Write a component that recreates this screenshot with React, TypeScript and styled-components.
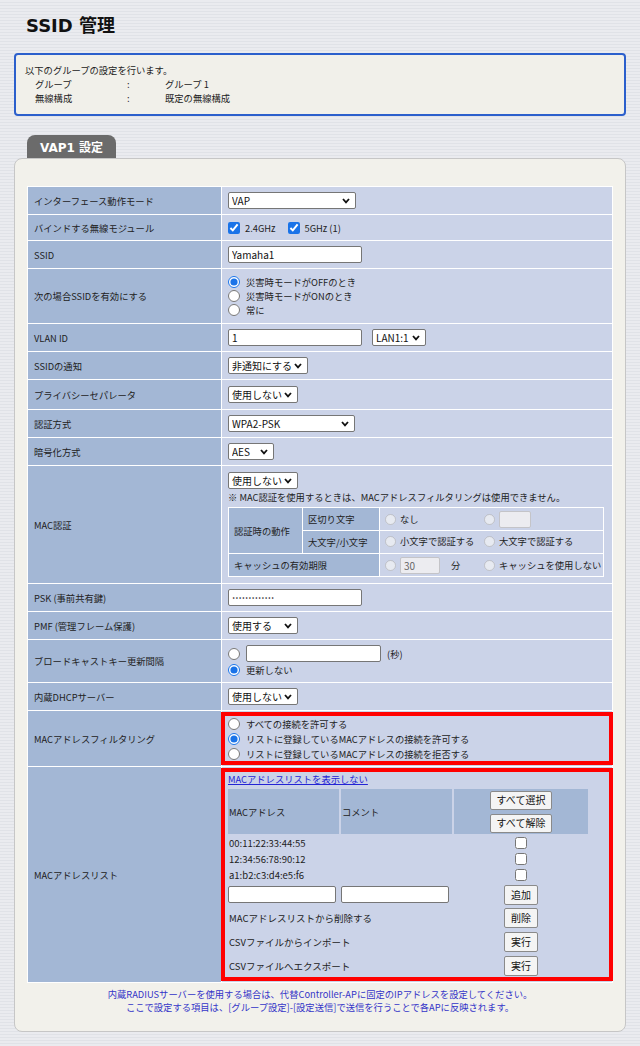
import React from "react";
import styled, { createGlobalStyle } from "styled-components";

const GlobalStyle = createGlobalStyle`
  html, body { margin: 0; padding: 0; }
  body {
    background: repeating-linear-gradient(to bottom, #eaebef 0px, #eaebef 2px, #e0e2e7 2px, #e0e2e7 3px);
    font-family: "Noto Sans CJK JP", "Noto Sans", sans-serif;
    font-size: 9.3px;
    color: #222;
  }
`;

const Page = styled.div`
  padding: 14px 14px 13px;
`;

const Title = styled.h1`
  margin: 0 0 15px 12px;
  font-family: "DejaVu Sans", "Noto Sans CJK JP", sans-serif;
  font-size: 18px;
  font-weight: bold;
  line-height: 24px;
  color: #111;
`;

const InfoBox = styled.div`
  border: 2px solid #2b5fcc;
  border-radius: 4px;
  background: #f1f0ea;
  padding: 8px 9px 9px;
  line-height: 14px;
`;

const InfoGrid = styled.div`
  display: grid;
  grid-template-columns: 92px 38px auto;
  padding-left: 10px;
`;

const Tab = styled.div`
  margin: 19px 0 0 13px;
  width: 89px;
  height: 23px;
  background: #6b6b6b;
  border-radius: 8px 8px 0 0;
  color: #fff;
  font-family: "DejaVu Sans", "Noto Sans CJK JP", sans-serif;
  font-weight: bold;
  font-size: 12px;
  display: flex;
  align-items: center;
  justify-content: center;
`;

const Panel = styled.div`
  background: #f2f1eb;
  border: 1px solid #c6c6c6;
  border-radius: 8px;
  padding: 27px 12px 17px;
`;

const MainTable = styled.table`
  width: 100%;
  border-collapse: collapse;
  table-layout: fixed;
`;

const LabelCol = styled.col`
  width: 194px;
`;

const Label = styled.td`
  background: #a3b7d5;
  border: 1px solid #fff;
  padding: 0 6px;
  vertical-align: middle;
`;

const Value = styled.td<{ $pv?: number; $pb?: number; $highlight?: boolean }>`
  background: #cbd3e8;
  border: 1px solid #fff;
  padding: ${(p) => p.$pv ?? 5}px 6px ${(p) => p.$pb ?? p.$pv ?? 5}px;
  vertical-align: middle;
  position: ${(p) => (p.$highlight ? "relative" : "static")};
  &::after {
    content: "";
    display: ${(p) => (p.$highlight ? "block" : "none")};
    position: absolute;
    top: 1px;
    bottom: 1px;
    left: -1px;
    right: -1px;
    border: 4px solid #f00;
    pointer-events: none;
  }
`;

const Line = styled.div<{ $h?: number; $gap?: number }>`
  display: flex;
  align-items: center;
  min-height: ${(p) => p.$h ?? 17}px;
  gap: ${(p) => p.$gap ?? 6}px;
  line-height: 14px;
`;

const SelectWrap = styled.span<{ $w: number }>`
  position: relative;
  display: inline-block;
  width: ${(p) => p.$w}px;
  height: 17px;
`;

const SelectBox = styled.select`
  appearance: none;
  -webkit-appearance: none;
  width: 100%;
  height: 17px;
  box-sizing: border-box;
  border: 1px solid #767676;
  border-radius: 2px;
  background: #fff;
  font-family: "Noto Sans CJK JP", sans-serif;
  font-size: 10px;
  color: #111;
  padding: 0 14px 0 3px;
  margin: 0;
  line-height: 15px;
`;

const Chevron = styled.svg`
  position: absolute;
  right: 6px;
  top: 6px;
  pointer-events: none;
`;

const Select = ({ w, value }: { w: number; value: string }) => (
  <SelectWrap $w={w}>
    <SelectBox defaultValue={value}>
      <option>{value}</option>
    </SelectBox>
    <Chevron width="8" height="6" viewBox="0 0 8 6">
      <polyline points="1,1 4,4.3 7,1" fill="none" stroke="#111" strokeWidth="1.8" />
    </Chevron>
  </SelectWrap>
);

const TextInput = styled.input<{ $w: number; $small?: boolean }>`
  width: ${(p) => p.$w}px;
  height: 17px;
  box-sizing: border-box;
  border: 1px solid #767676;
  border-radius: 2px;
  background: #fff;
  font-family: "DejaVu Sans", "Noto Sans CJK JP", sans-serif;
  font-size: ${(p) => (p.$small ? 5.5 : 10)}px;
  color: #111;
  padding: 0 3px;
  margin: 0;
  &:not([type="password"]) {
    font-family: "Noto Sans CJK JP", sans-serif;
  }
  &:disabled {
    background: #ececf0;
    border-color: #c4c4c8;
    color: #666;
  }
`;

const Check = styled.input`
  width: 12px;
  height: 12px;
  margin: 0;
  flex: none;
  accent-color: #1a73e8;
`;

const Radio = styled.input<{ $small?: boolean }>`
  width: ${(p) => (p.$small ? 11 : 12)}px;
  height: ${(p) => (p.$small ? 11 : 12)}px;
  margin: 0;
  flex: none;
  accent-color: #1a73e8;
`;

const Note = styled.div`
  line-height: 14px;
  margin-top: 1px;
`;

const SubTable = styled.table`
  margin-top: 3px;
  width: 376px;
  border-collapse: collapse;
  table-layout: fixed;
`;

const SubCol = styled.col<{ $w: number }>`
  width: ${(p) => p.$w}px;
`;

const SubLabel = styled.td`
  background: #a3b7d5;
  border: 1px solid #fff;
  padding: 0 5px;
  height: 22px;
`;

const SubValue = styled.td`
  background: #cbd3e8;
  border: 1px solid #fff;
  padding: 0 0 0 5px;
  height: 22px;
`;

const Group = styled.span<{ $w?: number }>`
  display: inline-flex;
  align-items: center;
  gap: 4px;
  width: ${(p) => (p.$w ? `${p.$w}px` : "auto")};
`;

const Unit = styled.span`
  margin-left: 7px;
`;

const Link = styled.a`
  display: block;
  color: #2424d4;
  text-decoration: underline;
  line-height: 14px;
  cursor: pointer;
`;

const MacTable = styled.table`
  border-collapse: separate;
  border-spacing: 2px;
  margin: 1px 0 0 -2px;
  table-layout: fixed;
`;

const MacHead = styled.td<{ $w: number }>`
  width: ${(p) => p.$w}px;
  background: #a3b7d5;
  padding: 0 1px;
  height: 45px;
`;

const ButtonStack = styled.div`
  display: flex;
  flex-direction: column;
  align-items: center;
  gap: 4px;
`;

const MacCell = styled.td<{ $h?: number; $flush?: boolean }>`
  padding: 0 ${(p) => (p.$flush ? 0 : 1)}px;
  height: ${(p) => p.$h ?? 14}px;
  vertical-align: middle;
  font-size: 9.5px;
`;

const CenterBox = styled.div`
  display: flex;
  justify-content: center;
  align-items: center;
`;

const Button = styled.button<{ $h?: number }>`
  height: ${(p) => p.$h ?? 20}px;
  box-sizing: border-box;
  border: 1px solid #8a8a8a;
  border-radius: 2px;
  background: #f4f4f4;
  font-family: "Noto Sans CJK JP", sans-serif;
  font-size: 10px;
  color: #111;
  padding: 0 6px;
  margin: 0;
  line-height: 1;
`;

const Footer = styled.div`
  margin-top: 5px;
  text-align: center;
  color: #3434c8;
  line-height: 13px;
`;

const macs = ["00:11:22:33:44:55", "12:34:56:78:90:12", "a1:b2:c3:d4:e5:f6"];

const actions = [
  { text: "MACアドレスリストから削除する", button: "削除" },
  { text: "CSVファイルからインポート", button: "実行" },
  { text: "CSVファイルへエクスポート", button: "実行" },
];

export default function App() {
  return (
    <>
      <GlobalStyle />
      <Page>
        <Title>SSID 管理</Title>
        <InfoBox>
          <div>以下のグループの設定を行います。</div>
          <InfoGrid>
            <span>グループ</span>
            <span>:</span>
            <span>グループ 1</span>
            <span>無線構成</span>
            <span>:</span>
            <span>既定の無線構成</span>
          </InfoGrid>
        </InfoBox>
        <Tab>VAP1 設定</Tab>
        <Panel>
          <MainTable>
            <colgroup>
              <LabelCol />
              <col />
            </colgroup>
            <tbody>
              <tr>
                <Label>インターフェース動作モード</Label>
                <Value>
                  <Line>
                    <Select w={128} value="VAP" />
                  </Line>
                </Value>
              </tr>
              <tr>
                <Label>バインドする無線モジュール</Label>
                <Value $pv={4}>
                  <Line $gap={5}>
                    <Check type="checkbox" defaultChecked />
                    <span>2.4GHz</span>
                    <Check type="checkbox" defaultChecked style={{ marginLeft: 7 }} />
                    <span>5GHz (1)</span>
                  </Line>
                </Value>
              </tr>
              <tr>
                <Label>SSID</Label>
                <Value>
                  <Line>
                    <TextInput $w={134} defaultValue="Yamaha1" />
                  </Line>
                </Value>
              </tr>
              <tr>
                <Label>次の場合SSIDを有効にする</Label>
                <Value $pv={6}>
                  <Line $h={14}>
                    <Radio type="radio" name="en" defaultChecked />
                    <span>災害時モードがOFFのとき</span>
                  </Line>
                  <Line $h={14}>
                    <Radio type="radio" name="en" />
                    <span>災害時モードがONのとき</span>
                  </Line>
                  <Line $h={14}>
                    <Radio type="radio" name="en" />
                    <span>常に</span>
                  </Line>
                </Value>
              </tr>
              <tr>
                <Label>VLAN ID</Label>
                <Value>
                  <Line $gap={10}>
                    <TextInput $w={134} defaultValue="1" />
                    <Select w={54} value="LAN1:1" />
                  </Line>
                </Value>
              </tr>
              <tr>
                <Label>SSIDの通知</Label>
                <Value>
                  <Line>
                    <Select w={80} value="非通知にする" />
                  </Line>
                </Value>
              </tr>
              <tr>
                <Label>プライバシーセパレータ</Label>
                <Value $pv={6}>
                  <Line>
                    <Select w={70} value="使用しない" />
                  </Line>
                </Value>
              </tr>
              <tr>
                <Label>認証方式</Label>
                <Value>
                  <Line>
                    <Select w={127} value="WPA2-PSK" />
                  </Line>
                </Value>
              </tr>
              <tr>
                <Label>暗号化方式</Label>
                <Value>
                  <Line>
                    <Select w={46} value="AES" />
                  </Line>
                </Value>
              </tr>
              <tr>
                <Label>MAC認証</Label>
                <Value $pv={6}>
                  <Line>
                    <Select w={70} value="使用しない" />
                  </Line>
                  <Note>※ MAC認証を使用するときは、MACアドレスフィルタリングは使用できません。</Note>
                  <SubTable>
                    <colgroup>
                      <SubCol $w={74} />
                      <SubCol $w={77} />
                      <col />
                    </colgroup>
                    <tbody>
                      <tr>
                        <SubLabel rowSpan={2}>認証時の動作</SubLabel>
                        <SubLabel>区切り文字</SubLabel>
                        <SubValue>
                          <Group $w={99}>
                            <Radio type="radio" $small disabled />
                            <span>なし</span>
                          </Group>
                          <Group>
                            <Radio type="radio" $small disabled />
                            <TextInput $w={32} disabled />
                          </Group>
                        </SubValue>
                      </tr>
                      <tr>
                        <SubLabel>大文字/小文字</SubLabel>
                        <SubValue>
                          <Group $w={99}>
                            <Radio type="radio" $small disabled />
                            <span>小文字で認証する</span>
                          </Group>
                          <Group>
                            <Radio type="radio" $small disabled />
                            <span>大文字で認証する</span>
                          </Group>
                        </SubValue>
                      </tr>
                      <tr>
                        <SubLabel colSpan={2}>キャッシュの有効期限</SubLabel>
                        <SubValue>
                          <Group $w={99}>
                            <Radio type="radio" $small disabled />
                            <TextInput $w={40} disabled defaultValue="30" />
                            <Unit>分</Unit>
                          </Group>
                          <Group>
                            <Radio type="radio" $small disabled />
                            <span>キャッシュを使用しない</span>
                          </Group>
                        </SubValue>
                      </tr>
                    </tbody>
                  </SubTable>
                </Value>
              </tr>
              <tr>
                <Label>PSK (事前共有鍵)</Label>
                <Value>
                  <Line>
                    <TextInput $w={134} $small type="password" defaultValue="yamahayamaha1" />
                  </Line>
                </Value>
              </tr>
              <tr>
                <Label>PMF (管理フレーム保護)</Label>
                <Value>
                  <Line>
                    <Select w={70} value="使用する" />
                  </Line>
                </Value>
              </tr>
              <tr>
                <Label>ブロードキャストキー更新間隔</Label>
                <Value $pv={5}>
                  <Line>
                    <Radio type="radio" name="bk" />
                    <TextInput $w={135} />
                    <span>(秒)</span>
                  </Line>
                  <Line $h={15}>
                    <Radio type="radio" name="bk" defaultChecked />
                    <span>更新しない</span>
                  </Line>
                </Value>
              </tr>
              <tr>
                <Label>内蔵DHCPサーバー</Label>
                <Value>
                  <Line>
                    <Select w={70} value="使用しない" />
                  </Line>
                </Value>
              </tr>
              <tr>
                <Label>MACアドレスフィルタリング</Label>
                <Value $pv={5} $highlight>
                  <Line $h={15}>
                    <Radio type="radio" name="mf" />
                    <span>すべての接続を許可する</span>
                  </Line>
                  <Line $h={15}>
                    <Radio type="radio" name="mf" defaultChecked />
                    <span>リストに登録しているMACアドレスの接続を許可する</span>
                  </Line>
                  <Line $h={15}>
                    <Radio type="radio" name="mf" />
                    <span>リストに登録しているMACアドレスの接続を拒否する</span>
                  </Line>
                </Value>
              </tr>
              <tr>
                <Label>MACアドレスリスト</Label>
                <Value $pv={5} $pb={3} $highlight>
                  <Link>MACアドレスリストを表示しない</Link>
                  <MacTable>
                    <tbody>
                      <tr>
                        <MacHead $w={109}>MACアドレス</MacHead>
                        <MacHead $w={109}>コメント</MacHead>
                        <MacHead $w={132}>
                          <ButtonStack>
                            <Button $h={19}>すべて選択</Button>
                            <Button $h={19}>すべて解除</Button>
                          </ButtonStack>
                        </MacHead>
                      </tr>
                      {macs.map((m) => (
                        <tr key={m}>
                          <MacCell>{m}</MacCell>
                          <MacCell />
                          <MacCell>
                            <CenterBox>
                              <Check type="checkbox" />
                            </CenterBox>
                          </MacCell>
                        </tr>
                      ))}
                      <tr>
                        <MacCell $h={21} $flush>
                          <TextInput $w={108} />
                        </MacCell>
                        <MacCell $h={21} $flush>
                          <TextInput $w={108} />
                        </MacCell>
                        <MacCell $h={21}>
                          <CenterBox>
                            <Button>追加</Button>
                          </CenterBox>
                        </MacCell>
                      </tr>
                      {actions.map((a) => (
                        <tr key={a.text}>
                          <MacCell $h={22} colSpan={2}>
                            {a.text}
                          </MacCell>
                          <MacCell $h={22}>
                            <CenterBox>
                              <Button>{a.button}</Button>
                            </CenterBox>
                          </MacCell>
                        </tr>
                      ))}
                    </tbody>
                  </MacTable>
                </Value>
              </tr>
            </tbody>
          </MainTable>
          <Footer>
            <div>内蔵RADIUSサーバーを使用する場合は、代替Controller-APに固定のIPアドレスを設定してください。</div>
            <div>ここで設定する項目は、[グループ設定]-[設定送信]で送信を行うことで各APに反映されます。</div>
          </Footer>
        </Panel>
      </Page>
    </>
  );
}
